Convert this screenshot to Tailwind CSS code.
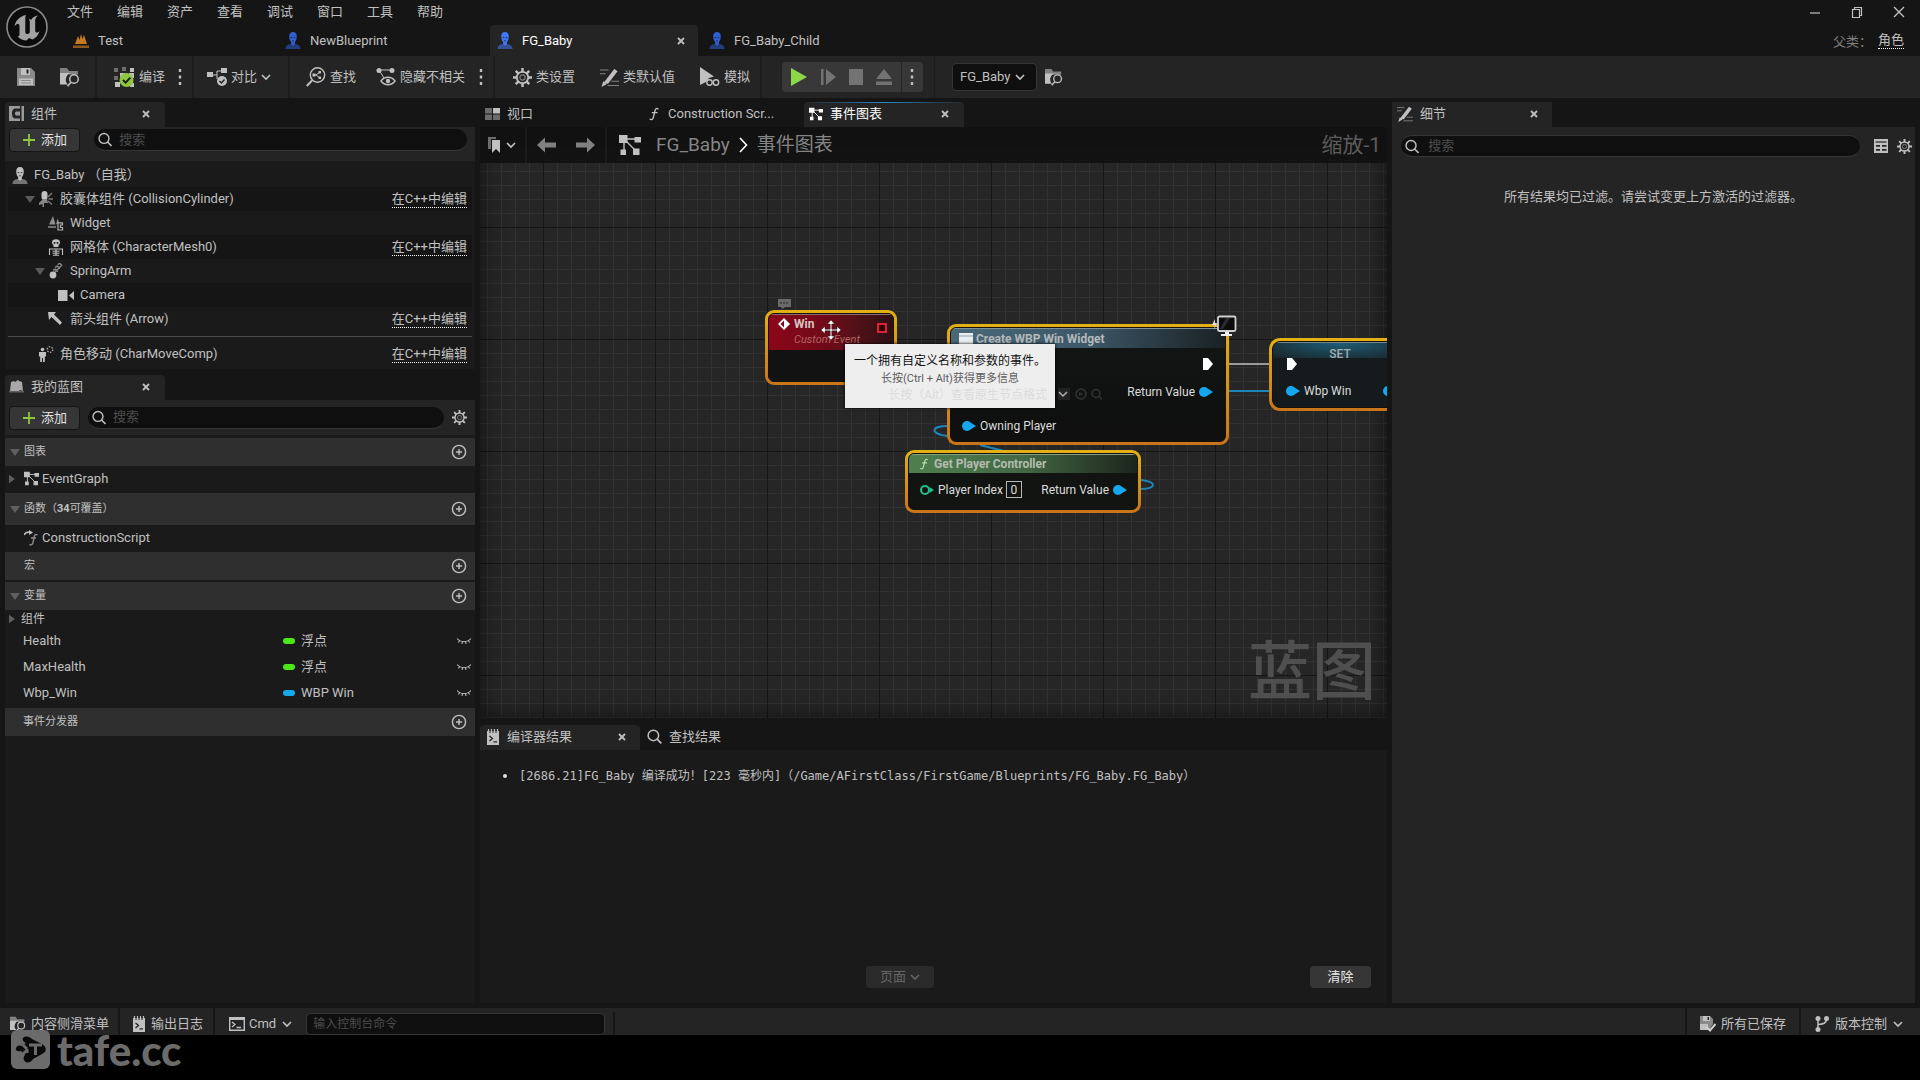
<!DOCTYPE html>
<html lang="zh-CN">
<head>
  <meta charset="UTF-8" />
  <meta name="viewport" content="width=device-width, initial-scale=1.0"/>
  <title>FG_Baby – 蓝图编辑器</title>
  <script src="https://cdn.jsdelivr.net/npm/@tailwindcss/browser@4"></script>
</head>
<body class="h-screen flex flex-col overflow-hidden bg-[#151515] text-[#c0c0c0] text-[13px] leading-4 font-[Roboto,'Noto_Sans_CJK_SC',sans-serif]">

  <!-- icon sprite -->
  <svg class="hidden">
    <symbol id="i-close" viewBox="0 0 8 8"><path d="M1 1l6 6M7 1L1 7" stroke="currentColor" stroke-width="1.8"/></symbol>
    <symbol id="i-chev" viewBox="0 0 10 10"><path d="M1 3l4 4 4-4" fill="none" stroke="currentColor" stroke-width="1.6"/></symbol>
    <symbol id="i-dots" viewBox="0 0 4 18"><path d="M.8 1h2.4v3H.8zM.8 7.5h2.4v3H.8zM.8 14h2.4v3H.8z" fill="currentColor"/></symbol>
    <symbol id="i-plus" viewBox="0 0 14 14"><path d="M7 1v12M1 7h12" stroke="#8dc63f" stroke-width="1.8"/></symbol>
    <symbol id="i-search" viewBox="0 0 16 16"><circle cx="6.8" cy="6.8" r="5.6" fill="none" stroke="currentColor" stroke-width="1.6"/><path d="M10.8 10.8L15.300 15.300" stroke="currentColor" stroke-width="1.8"/></symbol>
    <symbol id="i-addc" viewBox="0 0 16 16"><circle cx="8" cy="8" r="6.6" fill="none" stroke="currentColor" stroke-width="1.4"/><path d="M8 5v6M5 8h6" stroke="currentColor" stroke-width="1.4"/></symbol>
    <symbol id="i-person" viewBox="0 0 16 18"><path d="M0 18c0-3 2-4.600 5.500-5.200h5C14 13.400 16 15 16 18z" fill="currentColor" opacity=".55"/><path d="M8 0c2.800 0 4 2 4 4.800 0 2.400-.8 4.600-2 5.800V13L8 14.500 6 13v-2.400C4.800 9.400 4 7.200 4 4.800 4 2 5.200 0 8 0z" fill="currentColor"/><path d="M5.500 6h1.700M8.800 6h1.700M7.200 9.300h1.600" stroke="#1a1a2a" stroke-width=".9"/></symbol>
    <symbol id="i-gear" viewBox="0 0 20 20"><g stroke="currentColor"><path d="M10 0v4M10 16v4M0 10h4M16 10h4M2.900 2.900l2.900 2.900M14.200 14.200l2.900 2.900M2.900 17.100l2.900-2.900M14.200 5.800l2.900-2.900" stroke-width="2.600"/><circle cx="10" cy="10" r="6" fill="none" stroke-width="1.900"/><circle cx="10" cy="10" r="2.800" fill="none" stroke-width="1.200" opacity=".6"/></g></symbol>
    <symbol id="i-graph" viewBox="0 0 22 22"><path d="M5 5l11 11M5 5v13M5 5h12" stroke="currentColor" stroke-width="1.400" fill="none"/><path d="M0 1h8.500v8H0zM15.500 3H22v5.500h-6.500zM1.500 15.500H7V21H1.500zM14 14.500h6.500V21H14z" fill="currentColor"/></symbol>
    <symbol id="i-browse" viewBox="0 0 20 20"><path d="M0 1h7l2 3h9v3.500H0z" fill="currentColor" opacity=".6"/><path d="M0 6h12.500A6.600 6.600 0 0 0 8 17.500H0z" fill="currentColor"/><circle cx="14" cy="12" r="4.300" fill="none" stroke="currentColor" stroke-width="1.500"/><path d="M11 15.200L7.500 19.300" stroke="currentColor" stroke-width="1.700"/></symbol>
    <symbol id="i-pencil" viewBox="0 0 20 20"><path d="M0 2h9M0 6h6M12 14h8M8 18.500h12" stroke="currentColor" stroke-width="1.100" opacity=".6"/><path d="M15 1l3.500 2.500-10 13-5-.5z" fill="currentColor"/><path d="M3.500 14l3.500 3-5.500 3z" fill="currentColor"/></symbol>
    <symbol id="i-log" viewBox="0 0 12 16"><path d="M0 2h12v14H0z" fill="currentColor"/><path d="M1.500 0v3.500M4.500 0v3.500M7.500 0v3.500M10.500 0v3.500" stroke="currentColor" stroke-width="1.200"/><path d="M3 1.500v2.500M6 1.500v2.500M9 1.500v2.500" stroke="#242424" stroke-width="1"/><path d="M2.500 7l3 2.500-3 2.500M6.500 12.800h3.500" fill="none" stroke="#242424" stroke-width="1.300"/></symbol>
    <symbol id="i-fn" viewBox="0 0 12 16"><path d="M11 2.600C9.500 1 7.800 1.500 7.200 4L5.200 12c-.6 2.400-2.200 3.200-4.200 1.800M3.500 6.500h6.500" fill="none" stroke="currentColor" stroke-width="1.500"/></symbol>
    <symbol id="i-eye" viewBox="0 0 14 8"><path d="M0 1.500c3.500 4.300 10.500 4.300 14 0M2.500 3.600L1.500 5.500M5.500 4.700L5 7M8.500 4.700L9 7M11.500 3.600l1 1.900" fill="none" stroke="currentColor" stroke-width="1.100"/></symbol>
    <symbol id="i-down" viewBox="0 0 10 7"><path d="M0 0h10L5 7z" fill="currentColor"/></symbol>
    <symbol id="i-right" viewBox="0 0 7 10"><path d="M0 0v10l7-5z" fill="currentColor"/></symbol>
    <symbol id="i-exec" viewBox="0 0 10 12"><path d="M0 0h5l5 6-5 6H0z" fill="#fff"/></symbol>
    <symbol id="i-pin" viewBox="0 0 14 10"><circle cx="5" cy="5" r="5" fill="#14a9ee"/><path d="M8.500 1.500L14 5 8.500 8.500z" fill="#14a9ee"/></symbol>
  </svg>

  <header class="flex h-14 shrink-0">
    <svg class="w-[42px] h-[44px] ml-[6px] mt-[5px] shrink-0" viewBox="0 0 42 44">
      <circle cx="21" cy="22" r="20" fill="#0c0c0c" stroke="#8a8a8a" stroke-width="1.600"/>
      <path d="M20 10c-6 1-10.500 5.500-11.500 11.500 1.500-2 3-3 4-2.500.8.400 1 1.200 1 2.500v8c0 1.500-.5 2-2 1.800 2.500 3 6 4.200 9 4.200l2.500-2.500 3.500 1.500c3.500-1.500 6-4.500 7-8.500-1.200 1.300-2.500 1.800-3.200 1.500-.8-.3-1.100-1-1.100-2.300V15c0-1.500 1-3 2.800-4.500-3 .4-5.500 2-7 4.500-.7-.8-1.500-1-2.300-1 .8 1 1.100 1.800 1.100 3v10.500c-1 1.200-2 1.700-3 1.500-1-.2-1.500-1-1.500-2.500V14c0-1.700.2-2.800.7-4z" fill="#a2a2a2"/>
    </svg>
    <div class="flex-1 min-w-0 flex flex-col justify-between">
      <div class="flex justify-between">
        <nav class="flex pl-[7px] h-6 items-center" aria-label="主菜单">
          <button class="px-3">文件</button>
          <button class="px-3">编辑</button>
          <button class="px-3">资产</button>
          <button class="px-3">查看</button>
          <button class="px-3">调试</button>
          <button class="px-3">窗口</button>
          <button class="px-3">工具</button>
          <button class="px-3">帮助</button>
        </nav>
        <div class="flex items-center gap-[30px] pr-[15px] h-6">
          <button aria-label="最小化"><svg class="size-3" viewBox="0 0 12 12"><path d="M1 7h10" stroke="#c0c0c0" stroke-width="1.200"/></svg></button>
          <button aria-label="还原"><svg class="size-3" viewBox="0 0 12 12"><path d="M1.500 3.500h7v8h-7zM3.500 3.500v-2h7v8h-2" fill="none" stroke="#c0c0c0" stroke-width="1.200"/></svg></button>
          <button aria-label="关闭"><svg class="size-3" viewBox="0 0 12 12"><path d="M1 1l10 10M11 1L1 11" stroke="#c0c0c0" stroke-width="1.400"/></svg></button>
        </div>
      </div>
      <div class="flex justify-between">
        <div class="flex gap-1 pl-[18px]">
          <div class="flex items-center w-52 h-[31px] pl-[7px]">
            <svg class="w-4 h-[14px] mr-[9px]" viewBox="0 0 16 14"><path d="M2 10L5 2l1.500 4L8 0l1.500 5L11 1l3 9z" fill="#c67a1e"/><path d="M0 11.500h16V14H0z" fill="#8d5a1d"/></svg>
            <button>Test</button>
          </div>
          <div class="flex items-center w-52 h-[31px] pl-[7px]">
            <svg class="w-4 h-[17px] mr-[9px] text-[#2f5fd0]"><use href="#i-person"/></svg>
            <button>NewBlueprint</button>
          </div>
          <div class="flex items-center w-52 h-[31px] pl-[7px] pr-[13px] rounded-t bg-[#242424] text-white">
            <svg class="w-4 h-[17px] mr-[9px] text-[#3f78f5]"><use href="#i-person"/></svg>
            <button class="flex-1 text-left">FG_Baby</button>
            <button aria-label="关闭 FG_Baby"><svg class="size-2 text-[#c0c0c0]"><use href="#i-close"/></svg></button>
          </div>
          <div class="flex items-center w-52 h-[31px] pl-[7px]">
            <svg class="w-4 h-[17px] mr-[9px] text-[#2f5fd0]"><use href="#i-person"/></svg>
            <button>FG_Baby_Child</button>
          </div>
        </div>
        <div class="flex items-center pr-4 gap-[6px] text-[#808080]"><span class="font-['Noto_Sans_CJK_TC',sans-serif]">父类：</span><a href="#" class="text-[#c0c0c0] border-b border-dotted border-white">角色</a></div>
      </div>
    </div>
  </header>

  <div class="flex h-[42px] shrink-0 items-stretch bg-[#242424]">
    <div class="flex items-center w-[97px] pl-[17px] gap-[25px] border-r-2 border-[#1c1c1c]">
      <button aria-label="保存"><svg class="size-[18px]" viewBox="0 0 18 18"><path d="M0 0h14l4 4v14H0z" fill="#8a8a8a"/><path d="M4 0h9v7H4z" fill="#c0c0c0"/><path d="M9.500 1.500h2v4h-2z" fill="#242424"/><path d="M2 10.500h14V17H2z" fill="#c0c0c0"/><path d="M4 12.500h10M4 15h10" stroke="#888"/></svg></button>
      <button aria-label="浏览"><svg class="size-5"><use href="#i-browse"/></svg></button>
    </div>
    <div class="flex items-center w-[97px] pl-[17px] border-r-2 border-[#1c1c1c]">
      <button class="flex items-center gap-1">
        <svg class="size-[21px]" viewBox="0 0 21 21"><path d="M0 1h4v4H0zM8 0h4v4H8zM0 9h4v4H0z" fill="#6f6f6f"/><path d="M16 1h4v4h-4zM6 6h5v4H6zM1 15h5v5H1zM15 6h5v5h-5zM16 16h4v4h-4z" fill="#c0c0c0"/><circle cx="12.500" cy="13" r="7" fill="#8dc63f"/><path d="M9 13l2.600 2.600 4.700-5" fill="none" stroke="#1a1a1a" stroke-width="2"/></svg>
        编译</button>
      <button class="ml-[13px]" aria-label="编译选项"><svg class="w-1 h-[18px]"><use href="#i-dots"/></svg></button>
    </div>
    <div class="flex items-center w-24 pl-[13px] border-r-2 border-[#1c1c1c]">
      <button class="flex items-center gap-1">
        <svg class="size-5" viewBox="0 0 20 20"><path d="M3 8h7V4h5M10 8v4" fill="none" stroke="#c0c0c0"/><path d="M0 5h6v5H0zM14 1h6v5h-6z" fill="#c0c0c0"/><circle cx="15" cy="14" r="5" fill="#c0c0c0"/><path d="M12.500 14l2 2 3-3.500" fill="none" stroke="#242424" stroke-width="1.500"/></svg>
        对比 <svg class="size-[10px]"><use href="#i-chev"/></svg></button>
    </div>
    <div class="flex items-center w-[205px] pl-[16px] border-r-2 border-[#1c1c1c]">
      <button class="flex items-center gap-1">
        <svg class="size-5" viewBox="0 0 20 20"><circle cx="11.500" cy="8" r="7.200" fill="none" stroke="#c0c0c0" stroke-width="1.400"/><path d="M6 13.500L.8 19" stroke="#c0c0c0" stroke-width="2"/><path d="M7 8h3l4-3M10 8l4 3" stroke="#c0c0c0" fill="none"/><path d="M6.500 6.500h3v3h-3zM12.500 4h2.500v2.500h-2.500zM12.500 9.500H15V12h-2.500z" fill="#c0c0c0"/></svg>
        查找</button>
      <button class="flex items-center gap-1 ml-5">
        <svg class="size-5" viewBox="0 0 20 20"><path d="M3 3h13M3 3l5 8" stroke="#c0c0c0"/><circle cx="3" cy="3.500" r="2.500" fill="#c0c0c0"/><circle cx="16" cy="3.500" r="2.500" fill="#c0c0c0"/><path d="M5 14c3.500-5 10.500-5 14 0-3.500 5-10.500 5-14 0z" fill="none" stroke="#c0c0c0" stroke-width="1.400"/><circle cx="12" cy="14" r="2.200" fill="#c0c0c0"/></svg>
        隐藏不相关</button>
      <button class="ml-[14px]" aria-label="隐藏选项"><svg class="w-1 h-[18px]"><use href="#i-dots"/></svg></button>
    </div>
    <div class="flex items-center pl-[18px] gap-[25px] w-[267px] border-r-2 border-[#1c1c1c] whitespace-nowrap">
      <button class="flex items-center gap-1"><svg class="size-[19px]"><use href="#i-gear"/></svg>类设置</button>
      <button class="flex items-center gap-1"><svg class="size-[19px]"><use href="#i-pencil"/></svg>类默认值</button>
      <button class="flex items-center gap-1"><svg class="size-5" viewBox="0 0 20 20"><path d="M0 0l14 9.500-5 1.500-3 4-6 3z" fill="#c0c0c0"/><circle cx="9.500" cy="15.500" r="2.700" fill="none" stroke="#c0c0c0" stroke-width="1.400"/><circle cx="16" cy="15.500" r="2.700" fill="none" stroke="#c0c0c0" stroke-width="1.400"/></svg>模拟</button>
    </div>
    <div class="flex items-center w-[173px] pl-5 border-r border-[#1c1c1c]">
      <div class="flex items-center w-[141px] h-[30px] rounded bg-[#383838] pl-[9px] gap-[13px] text-[#737373]">
        <button aria-label="播放"><svg class="w-4 h-[18px]" viewBox="0 0 16 18"><path d="M0 0l16 9-16 9z" fill="#8bd84a"/></svg></button>
        <button aria-label="逐帧"><svg class="w-4 h-[16px]" viewBox="0 0 16 16"><path d="M1 0h2.500v16H1zM6 0l10 8-10 8z" fill="currentColor"/></svg></button>
        <button aria-label="停止"><svg class="w-[14px] h-4" viewBox="0 0 14 16"><path d="M0 0h14v16H0z" fill="currentColor"/></svg></button>
        <button aria-label="弹出"><svg class="w-4 h-[16px]" viewBox="0 0 16 16"><path d="M8 0l8 10H0zM0 12.500h16V16H0z" fill="currentColor"/></svg></button>
        <button aria-label="播放选项" class="border-l border-[#242424] h-[30px] -ml-1 pl-2 text-[#c0c0c0]"><svg class="w-1 h-[18px]"><use href="#i-dots"/></svg></button>
      </div>
    </div>
    <div class="flex items-center pl-[17px] gap-2">
      <div class="relative flex items-center">
        <select aria-label="调试对象" class="appearance-none w-[85px] h-7 pl-[7px] rounded bg-[#0f0f0f] border border-[#353535]"><option>FG_Baby</option></select>
        <svg class="absolute right-3 size-[10px] pointer-events-none"><use href="#i-chev"/></svg>
      </div>
      <button aria-label="定位"><svg class="size-[18px]"><use href="#i-browse"/></svg></button>
    </div>
  </div>

  <main class="flex-1 min-h-0 flex gap-[5px] px-[5px] pt-1 pb-[5px]">

    <!-- left column -->
    <div class="w-[470px] shrink-0 flex flex-col gap-[6px]">
      <section>
        <div class="flex items-center w-40 h-[25px] pb-[2px] pl-1 pr-[15px] rounded-t bg-[#242424]">
          <svg class="size-[15px] mr-[7px]" viewBox="0 0 15 15"><path d="M0 0h15v15H0z" fill="#9a9a9a"/><path d="M11 2.500H7C4 2.500 3 4.500 3 7.500s1 5 4 5h4v-3H8c-1.500 0-2-.6-2-2s.5-2 2-2h3z" fill="#242424"/><path d="M11 0h1.500v15H11z" fill="#242424"/></svg>
          <button class="flex-1 text-left">组件</button>
          <button aria-label="关闭组件"><svg class="size-2"><use href="#i-close"/></svg></button>
        </div>
        <div class="flex items-center h-[34px] pb-2 pl-1 pr-2 gap-[14px] bg-[#242424]">
          <button class="flex items-center justify-center gap-[5px] w-[71px] h-6 rounded-sm bg-[#363636] border border-[#141414] text-[#e0e0e0]"><svg class="size-[14px]"><use href="#i-plus"/></svg>添加</button>
          <label class="flex-1 flex items-center h-[22px] px-1 gap-[7px] rounded-full bg-[#0f0f0f] border-b border-[#353535]"><svg class="size-[15px]"><use href="#i-search"/></svg><input type="search" placeholder="搜索" aria-label="搜索组件" class="w-full outline-none placeholder:text-[#4d4d4d]"/></label>
        </div>
        <ul class="bg-[#1a1a1a] pt-[2px] pb-[3px] px-[3px]">
          <li class="flex items-center h-6 pl-1"><svg class="w-4 h-[17px] mr-[6px]"><use href="#i-person"/></svg>FG_Baby （自我）</li>
          <li class="flex items-center h-6 pl-[17px] pr-[5px] bg-[#151515]"><svg class="w-[10px] h-[7px] text-[#5a5a5a]"><use href="#i-down"/></svg>
            <svg class="w-4 h-[16px] ml-[3px] mr-[6px]" viewBox="0 0 16 16"><rect x="3.500" y="0" width="6" height="9" rx="3" fill="#c0c0c0"/><path d="M5 8h4l1 4H6v4H4.500v-3L1 14v-2z" fill="#888"/><path d="M10 6l4-4M10.500 8H15M10 10l4 3.500" stroke="#777" stroke-width="1.500"/></svg>
            <span class="flex-1">胶囊体组件 (CollisionCylinder)</span><a href="#" class="border-b border-dotted border-white">在C++中编辑</a></li>
          <li class="flex items-center h-6 pl-10"><svg class="w-4 h-[15px] mr-[6px]" viewBox="0 0 16 15"><path d="M1 8.500L5 0l2.500 8.500zM8 8.500l1.500-6 1.500 4z" fill="#8d8d8d"/><path d="M0 10h8v2H0z" fill="#6f6f6f"/><path d="M14.500 9V6.800H10V14h4.500v-2.500h-2V9z" fill="none" stroke="#b0b0b0" stroke-width="1.200"/></svg>Widget</li>
          <li class="flex items-center h-6 pl-10 pr-[5px] bg-[#151515]"><svg class="w-4 h-[17px] mr-[6px]" viewBox="0 0 16 17"><path d="M8 .3c2.600 0 4 1.200 4 3.200 0 1.200-.6 2-1.500 2.500v2h-5V6C4.600 5.500 4 4.700 4 3.500 4 1.500 5.400.3 8 .3z" fill="#c0c0c0"/><path d="M5.700 3h1.600v1.800H5.700zM8.700 3h1.600v1.800H8.700z" fill="#151515"/><path d="M1.500 16v-6h13v6M8 10v6.500M4.500 12.200h7M4.500 14.200h7M5 16.300h6" fill="none" stroke="#c0c0c0" stroke-width="1.100"/></svg>
            <span class="flex-1">网格体 (CharacterMesh0)</span><a href="#" class="border-b border-dotted border-white">在C++中编辑</a></li>
          <li class="flex items-center h-6 pl-[27px]"><svg class="w-[10px] h-[7px] text-[#5a5a5a]"><use href="#i-down"/></svg><svg class="w-[14px] h-4 ml-1 mr-[7px]" viewBox="0 0 14 16"><circle cx="4" cy="12" r="3.400" fill="#c0c0c0"/><path d="M5 8c-1-3 3-2 3.500 1M7 5c-1-3 3-2 3.500 1M9 2c0-2 3-2 4 1M6 9l7-7" fill="none" stroke="#8d8d8d" stroke-width="1.300"/></svg>SpringArm</li>
          <li class="flex items-center h-6 pl-[50px] bg-[#151515]"><svg class="w-4 h-[11px] mr-[6px]" viewBox="0 0 16 11"><path d="M0 0h9.500v11H0zM11 5.500L16 1v9z" fill="#c0c0c0"/></svg>Camera</li>
          <li class="flex items-center h-6 pl-10 pr-[5px]"><svg class="size-[14px] mr-2" viewBox="0 0 14 14"><path d="M0 0h8L6 2.500l8 8-2 2.500-8.500-8L1 8z" fill="#c0c0c0"/></svg>
            <span class="flex-1">箭头组件 (Arrow)</span><a href="#" class="border-b border-dotted border-white">在C++中编辑</a></li>
          <li class="flex items-center h-6 pl-[30px] pr-[5px] mt-[11px] relative before:absolute before:-top-[6px] before:inset-x-0 before:h-px before:bg-[#4c4c4c]"><svg class="size-4 mr-[6px]" viewBox="0 0 16 16"><circle cx="4.500" cy="3.500" r="1.800" fill="#c0c0c0"/><path d="M1 6h7v4.500H6.800V16H5v-4H4v4H2.200v-5.500H1z" fill="#c0c0c0"/><circle cx="12" cy="3.500" r="2.800" fill="none" stroke="#b0b0b0" stroke-width="1.300" stroke-dasharray="1.500 1.400"/></svg>
            <span class="flex-1">角色移动 (CharMoveComp)</span><a href="#" class="border-b border-dotted border-white">在C++中编辑</a></li>
        </ul>
      </section>

      <section class="flex-1 min-h-0 flex flex-col bg-[#1a1a1a]">
        <div class="bg-[#151515]">
          <div class="flex items-center w-40 h-[25px] pb-px pl-1 pr-[15px] rounded-t bg-[#242424]">
            <svg class="w-[15px] h-[14px] mr-[7px]" viewBox="0 0 15 14"><path d="M2 2l3-1 1 1 3-2 1 1 3 1 1 9-3-1-2 2-2-1-2 1-4-1z" fill="#a8a8a8"/><path d="M0 11h15v1.500H0z" fill="#5f5f5f"/></svg>
            <button class="flex-1 text-left">我的蓝图</button>
            <button aria-label="关闭我的蓝图"><svg class="size-2"><use href="#i-close"/></svg></button>
          </div>
        </div>
        <div class="flex items-center h-[35px] pl-1 pr-2 mb-[3px] gap-2 bg-[#242424]">
          <button class="flex items-center justify-center gap-[5px] w-[71px] h-6 rounded-sm bg-[#363636] border border-[#141414] text-[#e0e0e0]"><svg class="size-[14px]"><use href="#i-plus"/></svg>添加</button>
          <label class="flex-1 flex items-center h-[22px] px-1 gap-[7px] rounded-full bg-[#0f0f0f] border-b border-[#353535]"><svg class="size-[15px]"><use href="#i-search"/></svg><input type="search" placeholder="搜索" aria-label="搜索蓝图" class="w-full outline-none placeholder:text-[#4d4d4d]"/></label>
          <button aria-label="设置"><svg class="size-[15px]"><use href="#i-gear"/></svg></button>
        </div>
        <div class="flex items-center h-7 pl-[5px] pr-2 bg-[#2f2f2f] text-[11px]"><svg class="w-[10px] h-[7px] mr-1 text-[#5f5f5f]"><use href="#i-down"/></svg><span class="flex-1">图表</span><button aria-label="添加图表"><svg class="size-4"><use href="#i-addc"/></svg></button></div>
        <div class="flex items-center h-[27px] pb-[2px] pl-1"><svg class="w-[6px] h-[10px] mr-[9px] text-[#5f5f5f]"><use href="#i-right"/></svg><svg class="size-[15px] mr-[3px]"><use href="#i-graph"/></svg>EventGraph</div>
        <div class="flex items-center h-8 pl-[5px] pr-2 bg-[#2f2f2f] text-[11px]"><svg class="w-[10px] h-[7px] mr-1 text-[#5f5f5f]"><use href="#i-down"/></svg><span class="flex-1">函数（<b>34</b>可覆盖）</span><button aria-label="添加函数"><svg class="size-4"><use href="#i-addc"/></svg></button></div>
        <div class="flex items-center h-[27px] pb-[2px] pl-[19px]"><svg class="size-4 mr-[2px]" viewBox="0 0 16 16"><path d="M0 5c1-2 3-3 5-3" fill="none" stroke="#c0c0c0" stroke-width="1.600"/><path d="M5 0l4 2.500L5 5z" fill="#c0c0c0"/><path d="M13.500 5c-1.500-1-2.800-.5-3.300 1.500L9 12.500c-.4 2-1.800 2.800-3.500 2M7 8h5" fill="none" stroke="#8a8a8a" stroke-width="1.400"/></svg>ConstructionScript</div>
        <div class="flex items-center h-7 pl-[19px] pr-2 bg-[#2f2f2f] text-[11px]"><span class="flex-1">宏</span><button aria-label="添加宏"><svg class="size-4"><use href="#i-addc"/></svg></button></div>
        <div class="flex items-center h-7 pl-[5px] pr-2 mt-[2px] bg-[#2f2f2f] text-[11px]"><svg class="w-[10px] h-[7px] mr-1 text-[#5f5f5f]"><use href="#i-down"/></svg><span class="flex-1">变量</span><button aria-label="添加变量"><svg class="size-4"><use href="#i-addc"/></svg></button></div>
        <div class="flex items-center h-[18px] pl-1 text-[12px]"><svg class="w-[6px] h-[10px] mr-[6px] text-[#5f5f5f]"><use href="#i-right"/></svg>组件</div>
        <table class="w-full mb-[2px]">
          <tbody>
            <tr class="h-[26px]"><td class="pl-[18px] w-[278px]">Health</td><td><div class="flex items-center gap-[6px]"><i class="w-3 h-[6px] rounded-full bg-[#4be818]"></i>浮点</div></td><td class="w-[18px]"><svg class="w-[14px] h-2"><use href="#i-eye"/></svg></td></tr>
            <tr class="h-[26px]"><td class="pl-[18px]">MaxHealth</td><td><div class="flex items-center gap-[6px]"><i class="w-3 h-[6px] rounded-full bg-[#4be818]"></i>浮点</div></td><td><svg class="w-[14px] h-2"><use href="#i-eye"/></svg></td></tr>
            <tr class="h-[26px]"><td class="pl-[18px]">Wbp_Win</td><td><div class="flex items-center gap-[6px]"><i class="w-3 h-[6px] rounded-full bg-[#14a9ee]"></i>WBP Win</div></td><td><svg class="w-[14px] h-2"><use href="#i-eye"/></svg></td></tr>
          </tbody>
        </table>
        <div class="flex items-center h-7 pl-[18px] pr-2 bg-[#2f2f2f] text-[11px]"><span class="flex-1">事件分发器</span><button aria-label="添加事件分发器"><svg class="size-4"><use href="#i-addc"/></svg></button></div>
      </section>
    </div>

    <!-- graph editor -->
    <div class="flex-1 min-w-0 flex flex-col">
      <div class="flex gap-[2px]">
        <div class="flex items-center w-40 h-[25px] pb-[2px] pl-[5px]">
          <svg class="w-[15px] h-[12px] mr-[7px]" viewBox="0 0 15 12"><path d="M0 0h7v5.500H0zM0 6.500h7V12H0zM8 6.500h7V12H8z" fill="#6c6c6c"/><path d="M8 0h7v5.500H8z" fill="#c0c0c0"/></svg>
          <button>视口</button>
        </div>
        <div class="flex items-center w-40 h-[25px] pb-[2px] pl-[6px]">
          <svg class="w-3 h-[14px] mr-2"><use href="#i-fn"/></svg>
          <button>Construction Scr...</button>
        </div>
        <div class="relative flex items-center w-40 h-[25px] pb-[2px] pl-[5px] pr-[15px] rounded-t bg-[#242424] text-white before:absolute before:top-0 before:inset-x-0 before:h-px before:bg-linear-to-r before:from-transparent before:via-[#2a86c8] before:to-transparent">
          <svg class="size-[14px] mr-[7px]"><use href="#i-graph"/></svg>
          <button class="flex-1 text-left">事件图表</button>
          <button aria-label="关闭事件图表"><svg class="size-2 text-[#c0c0c0]"><use href="#i-close"/></svg></button>
        </div>
      </div>

      <div class="relative flex-1 min-h-0 overflow-hidden bg-[#262626]">
        <svg class="absolute inset-0 w-full h-full">
          <defs>
            <pattern id="minor" x="63" y="100" width="14" height="14" patternUnits="userSpaceOnUse"><path d="M.5 0v14M0 .5h14" stroke="#323232"/></pattern>
            <pattern id="major" x="63" y="100" width="112" height="112" patternUnits="userSpaceOnUse"><path d="M.5 0v112M0 .5h112" stroke="#161616"/></pattern>
          </defs>
          <rect width="100%" height="100%" fill="url(#minor)"/>
          <rect width="100%" height="100%" fill="url(#major)"/>
        </svg>
        <div class="absolute inset-0 shadow-[inset_0_0_24px_rgba(0,0,0,0.6)]"></div>

        <div class="relative flex items-center h-9 bg-[#111111]/95 text-[19px] leading-6 text-[#858585]">
          <button class="flex items-center gap-[6px] w-[47px] h-full pl-2 border-r-2 border-[#1a1a1a] text-[#c0c0c0]" aria-label="书签"><svg class="w-3 h-4" viewBox="0 0 12 16"><path d="M0 0h8v2H3v10H0z" fill="#6c6c6c"/><path d="M4 3h8v13l-4-4-4 4z" fill="#c0c0c0"/></svg><svg class="size-[10px]"><use href="#i-chev"/></svg></button>
          <div class="flex items-center gap-5 w-20 h-full pl-[10px] border-r-2 border-[#1a1a1a]">
            <button aria-label="后退"><svg class="w-[19px] h-4" viewBox="0 0 19 16"><path d="M0 8l8-7.500V5.500h11v5H8v5z" fill="#808080"/></svg></button>
            <button aria-label="前进"><svg class="w-[19px] h-4" viewBox="0 0 19 16"><path d="M19 8l-8-7.500V5.500H0v5h11v5z" fill="#808080"/></svg></button>
          </div>
          <svg class="size-[22px] ml-3 mr-[15px] text-[#c0c0c0]"><use href="#i-graph"/></svg>
          <a href="#">FG_Baby</a>
          <svg class="w-[9px] h-4 ml-[9px] mr-[9px]" viewBox="0 0 9 16"><path d="M1 1l6.500 7L1 15" fill="none" stroke="#fff" stroke-width="1.600"/></svg>
          <span class="flex-1">事件图表</span>
          <span class="pr-[6px] text-[21px] text-[#5c5c5c]">缩放-1</span>
        </div>

        <div class="absolute right-[11px] bottom-[12px] text-[64px] leading-[66px] font-medium text-[#4f4f4f]">蓝图</div>

        <!-- wires -->
        <svg class="absolute inset-0 w-full h-full" fill="none" stroke-width="2">
          <path d="M748 237h60" stroke="#9a9a9a"/>
          <path d="M748 264h60M661 353c16 2 16 8 0 9M468 299c-18 0-18 8 0 10M500 318l32 8" stroke="#1c86b8"/>
        </svg>

        <!-- event node -->
        <svg class="absolute left-[298px] top-[172px] w-[13px] h-[10px]" viewBox="0 0 13 10"><path d="M0 0h13v8H7l-2 2-2-2H0z" fill="#6a6a6a"/><path d="M2 4h9" stroke="#3a3a3a" stroke-width="1.500" stroke-dasharray="2 1"/></svg>
        <div class="absolute left-[285px] top-[183px] w-[132px] h-[75px] p-[3px] rounded-[9px] bg-linear-to-b from-[#e3b014] to-[#c8741a]">
          <div class="h-full rounded-[6px] overflow-hidden border border-[#15110c] bg-[#121212]">
            <div class="flex h-[36px] pl-[9px] pr-[6px] pt-[2px] bg-linear-to-r from-[#8c0518] via-[#6d0a18] to-[#2c1014] border-t border-[#8d6b70]">
              <svg class="size-3 mr-[4px] mt-[1px]" viewBox="0 0 12 12"><path d="M6 0l6 6-6 6-6-6z" fill="#fff"/><path d="M6 2.500v7L2.500 6z" fill="#7a0616"/></svg>
              <div class="flex-1 leading-[15px] text-[12px] whitespace-nowrap"><b class="text-[#d6c4c4]">Win</b><p class="italic text-[11px] text-[#b06560]">Custom Event</p></div>
              <i class="size-[10px] mt-[6px] border-2 border-[#e3203c] bg-[#300]"></i>
            </div>
          </div>
        </div>

        <!-- create widget node -->
        <div class="absolute left-[467px] top-[197px] w-[282px] h-[121px] p-[3px] rounded-[9px] bg-linear-to-b from-[#e3b014] to-[#c8741a] text-[12px] text-[#dcdcdc]">
          <div class="flex flex-col h-full rounded-[6px] overflow-hidden border border-[#15110c] bg-linear-to-b from-[#121614] to-[#0e0f0e]">
            <div class="flex items-center h-5 pl-2 gap-[3px] bg-linear-to-r from-[#4a6878] via-[#3c5868] to-[#1a2124] border-t border-[#7d939c] font-bold text-[#b4b9ba]"><svg class="w-[14px] h-[11px]" viewBox="0 0 14 11"><path d="M0 0h14v11H0z" fill="#e8eef0"/><path d="M0 3h14" stroke="#8fa3ac"/></svg>Create WBP Win Widget</div>
            <div class="flex justify-end pt-[10px] pr-[12px]"><svg class="w-[10px] h-3"><use href="#i-exec"/></svg></div>
            <div class="flex justify-end items-center pt-[14px] pr-[12px] gap-1">
              <svg class="w-[44px] h-[16px] mr-[21px]" viewBox="0 -4 44 16"><path d="M0 0h12v12H0z" fill="#222"/><path d="M1 4l4 4 4-4" fill="none" stroke="#b0b0b0" stroke-width="1.500"/><circle cx="23" cy="6" r="5" fill="none" stroke="#333" stroke-width="1.500"/><path d="M21 4l4 2-4 2z" fill="#333"/><circle cx="38" cy="5.500" r="4" fill="none" stroke="#333" stroke-width="1.500"/><path d="M41 8.500l3 3" stroke="#333" stroke-width="1.500"/></svg>
              <span>Return Value</span><svg class="w-[14px] h-[10px]"><use href="#i-pin"/></svg></div>
            <div class="flex items-center pt-[18px] pl-[11px] gap-1"><svg class="w-[14px] h-[10px]"><use href="#i-pin"/></svg>Owning Player</div>
          </div>
        </div>
        <svg class="absolute left-[731px] top-[188px] w-[26px] h-[23px]" viewBox="0 0 26 23"><path d="M4 4L1 10h3l-1 5 3-7H4z" fill="#ddd"/><rect x="7" y="1.500" width="17.500" height="14.500" rx="1.500" fill="#0c0c0c" stroke="#d0d0d0" stroke-width="1.800"/><path d="M9 14l6-11h4L12 14z" fill="#2c2c2c"/><path d="M14 17h4v2h3v2H10v-2h4z" fill="#eee"/></svg>

        <!-- player controller node -->
        <div class="absolute left-[425px] top-[323px] w-[236px] h-[63px] p-[3px] rounded-[9px] bg-linear-to-b from-[#e3b014] to-[#c8741a] text-[12px] text-[#dcdcdc]">
          <div class="h-full rounded-[6px] overflow-hidden border border-[#15110c] bg-[#111411]">
            <div class="flex items-center h-[19px] pl-[10px] gap-[5px] bg-linear-to-r from-[#4f7f4f] via-[#426844] to-[#1c261c] border-t border-[#86a086] font-bold text-[#b4bcb0]"><svg class="w-[10px] h-3 text-[#b8e0a8]"><use href="#i-fn"/></svg>Get Player Controller</div>
            <div class="flex items-center pl-[11px] pr-[10px] pt-2"><svg class="w-[14px] h-[10px] mr-[4px]" viewBox="0 0 14 10"><circle cx="5" cy="5" r="4" fill="none" stroke="#1fbf8c" stroke-width="2"/><path d="M9.500 2L14 5l-4.500 3z" fill="#1fbf8c"/></svg><label for="pidx">Player Index</label><input id="pidx" value="0" class="w-4 h-[17px] ml-[3px] border border-[#b8b8b8] text-center outline-none"/><span class="flex-1 text-right">Return Value</span><svg class="w-[14px] h-[10px] ml-[4px]"><use href="#i-pin"/></svg></div>
          </div>
        </div>

        <!-- set node -->
        <div class="absolute left-[789px] top-[211px] w-[142px] h-[73px] p-[3px] rounded-[11px] bg-linear-to-b from-[#e3b014] to-[#c8741a] text-[12px] text-[#dcdcdc]">
          <div class="h-full rounded-[8px] overflow-hidden border border-[#15110c] bg-[#151b1d]">
            <div class="h-4 pt-[3px] text-center border-t border-[#75878c] bg-radial-[at_50%_0%] from-[#1d5d78] to-[#1a2326] font-medium text-[#a4acae]">SET</div>
            <div class="flex justify-between pl-[14px] pr-[10px]"><svg class="w-[10px] h-3"><use href="#i-exec"/></svg><svg class="w-[10px] h-3"><use href="#i-exec"/></svg></div>
            <div class="flex items-center pl-[13px] pr-[10px] pt-[13px] gap-1"><svg class="w-[14px] h-[10px]"><use href="#i-pin"/></svg><span class="flex-1">Wbp Win</span><svg class="w-[14px] h-[10px]"><use href="#i-pin"/></svg></div>
          </div>
        </div>

        <div role="tooltip" class="absolute left-[365px] top-[217px] w-[210px] h-16 pt-[9px] bg-[#eeeeee] shadow-[0_0_3px_#000] text-center text-[12px] text-[#111] whitespace-nowrap">
          <p>一个拥有自定义名称和参数的事件。</p>
          <p class="text-[11px] leading-5 text-[#5c5c5c]">长按(Ctrl + Alt)获得更多信息</p>
          <p class="pr-2 leading-3 text-right text-[#dcdcdc]">长按（Alt）查看原生节点格式</p>
        </div>
        <svg class="absolute left-[341px] top-[193px] size-5" viewBox="0 0 20 20"><path d="M10 0l3.500 4h-2.700v5.200H16V6.500l4 3.500-4 3.500v-2.700h-5.200V16h2.700L10 20l-3.500-4h2.700v-5.200H4v2.700L0 10l4-3.500v2.700h5.200V4H6.500z" fill="#fff" stroke="#222" stroke-width=".5"/></svg>
      </div>

      <!-- compiler results -->
      <div class="flex pt-[7px]">
        <div class="flex items-center w-40 h-[25px] pb-[2px] pl-[7px] pr-[14px] rounded-t bg-[#242424]">
          <svg class="w-3 h-4 mr-[8px]"><use href="#i-log"/></svg>
          <button class="flex-1 text-left">编译器结果</button>
          <button aria-label="关闭编译器结果"><svg class="size-2"><use href="#i-close"/></svg></button>
        </div>
        <div class="flex items-center h-[25px] pb-[2px] pl-[7px] gap-[7px]">
          <svg class="size-[15px]"><use href="#i-search"/></svg>
          <button>查找结果</button>
        </div>
      </div>
      <div class="flex flex-col justify-between h-[253px] bg-[#1a1a1a] pt-[18px] pb-[15px]">
        <ul><li class="flex items-center pl-[23px] gap-3 text-[12px] font-['DejaVu_Sans_Mono','Noto_Sans_CJK_TC',monospace]"><i class="size-1 rounded-full bg-[#e0e0e0]"></i>[2686.21]FG_Baby 编译成功！[223 毫秒内]（/Game/AFirstClass/FirstGame/Blueprints/FG_Baby.FG_Baby）</li></ul>
        <div class="flex items-center pl-[10px] pr-4">
          <div class="flex-1 flex justify-center">
            <button disabled class="flex items-center justify-center gap-1 w-[68px] h-[22px] rounded bg-[#2a2a2a] text-[#666]">页面 <svg class="size-[10px]"><use href="#i-chev"/></svg></button>
          </div>
          <button class="w-[61px] h-[22px] rounded bg-[#363636] text-[#e8e8e8]">清除</button>
        </div>
      </div>
    </div>

    <!-- details -->
    <section class="w-[523px] shrink-0 flex flex-col">
      <div class="flex items-center w-40 h-[25px] pb-[2px] pl-[5px] pr-[14px] bg-[#242424]">
        <svg class="size-4 mr-[7px]"><use href="#i-pencil"/></svg>
        <button class="flex-1 text-left">细节</button>
        <button aria-label="关闭细节"><svg class="size-2"><use href="#i-close"/></svg></button>
      </div>
      <div class="flex-1 bg-[#242424]">
        <div class="flex items-center pt-2 pl-[9px] pr-[3px]">
          <label class="flex-1 flex items-center h-[22px] px-1 gap-[9px] rounded-full bg-[#0f0f0f] border-y border-[#353535]"><svg class="size-[15px]"><use href="#i-search"/></svg><input type="search" placeholder="搜索" aria-label="搜索细节" class="w-full outline-none placeholder:text-[#4d4d4d]"/></label>
          <button aria-label="属性矩阵" class="ml-[14px]"><svg class="size-[14px]" viewBox="0 0 14 14"><path d="M0 0h14v14H0z" fill="#c0c0c0"/><path d="M1.500 3h11" stroke="#242424" stroke-width="1.200"/><path d="M2 6.800h4M8 6.800h4.500M2 10.800h4M8 10.800h4.500" stroke="#242424" stroke-width="1.800"/></svg></button>
          <button aria-label="细节设置" class="ml-[9px]"><svg class="size-[15px]"><use href="#i-gear"/></svg></button>
        </div>
        <p class="mt-8 text-center">所有结果均已过滤。请尝试变更上方激活的过滤器。</p>
      </div>
    </section>
  </main>

  <footer class="flex h-[27px] shrink-0 bg-[#242424] overflow-hidden">
    <button class="flex items-center pt-1 pl-[10px] gap-[5px] w-[120px] border-r-2 border-[#161616]"><svg class="size-4"><use href="#i-browse"/></svg>内容侧滑菜单</button>
    <button class="flex items-center pt-1 pl-[13px] gap-[6px] w-[95px] border-r-2 border-[#161616]"><svg class="w-3 h-4"><use href="#i-log"/></svg>输出日志</button>
    <div class="flex items-center flex-1 pt-1 pl-[14px]">
      <button class="flex items-center gap-1"><svg class="w-4 h-[14px]" viewBox="0 0 16 14"><path d="M.7.7h14.600v12.600H.7z" fill="none" stroke="#c0c0c0" stroke-width="1.400"/><path d="M0 0h16v3H0z" fill="#c0c0c0"/><path d="M3 5l3 2.500L3 10M7.500 10.500h4.500" fill="none" stroke="#c0c0c0" stroke-width="1.300"/></svg>Cmd <svg class="size-[10px] ml-[2px]"><use href="#i-chev"/></svg></button>
      <input type="text" placeholder="输入控制台命令" aria-label="控制台命令" class="ml-[14px] w-[299px] h-[22px] pl-[6px] rounded bg-[#0f0f0f] border border-[#353535] text-[12px] outline-none placeholder:text-[#4d4d4d]"/>
      <i class="ml-2 w-[2px] h-full bg-[#161616]"></i>
    </div>
    <button class="flex items-center pt-1 pl-[13px] gap-[5px] w-[114px] border-l-2 border-[#161616]"><svg class="size-4" viewBox="0 0 16 16"><path d="M0 0h10l3 3v5l-4 6H0z" fill="#8a8a8a"/><path d="M3 0h7v5H3z" fill="#c0c0c0"/><path d="M7.500 1h1.500v3H7.500z" fill="#242424"/><path d="M0 8h8v6H0z" fill="#c0c0c0"/><path d="M6.500 11l3.500 3.500 5.500-6.500" fill="none" stroke="#d0d0d0" stroke-width="2"/></svg>所有已保存</button>
    <button class="flex items-center pt-1 pl-[14px] gap-[6px] w-[121px] border-l-2 border-[#161616]"><svg class="w-[14px] h-4" viewBox="0 0 14 16"><path d="M3 3v10M11.500 3c0 5-4 5-8.500 5.500" fill="none" stroke="#c0c0c0" stroke-width="1.500"/><circle cx="3" cy="2.500" r="2.500" fill="#c0c0c0"/><circle cx="11.500" cy="2.500" r="2.500" fill="#c0c0c0"/><circle cx="3" cy="13.500" r="2.500" fill="#c0c0c0"/></svg>版本控制 <svg class="size-[10px]"><use href="#i-chev"/></svg></button>
  </footer>

  <div class="relative h-[45px] shrink-0 bg-black">
    <div class="absolute left-[11px] -top-[5px] flex items-center gap-[7px] text-[#6b6b6b]">
      <svg class="size-[39px]" viewBox="0 0 39 39"><rect width="39" height="39" rx="6" fill="currentColor"/><path d="M12 8c3-3 7-1 9 1l10 5c5 3 5 8 0 10l-9 5c-2 4-7 5-9 1-1-2 0-4 1-5l-4-4c-4 1-6-1-5-3 1-3 4-3 6-2l4-3c-3-1-4-4-3-5z" fill="#0a0a0a"/><path d="M18 15h13M24.500 15v10M12 15l4 4M12 24l4-4M16 19v4" stroke="currentColor" stroke-width="3"/></svg>
      <span class="font-[Lato,sans-serif] font-black text-[42px] leading-8">tafe.cc</span>
    </div>
  </div>
</body>
</html>
